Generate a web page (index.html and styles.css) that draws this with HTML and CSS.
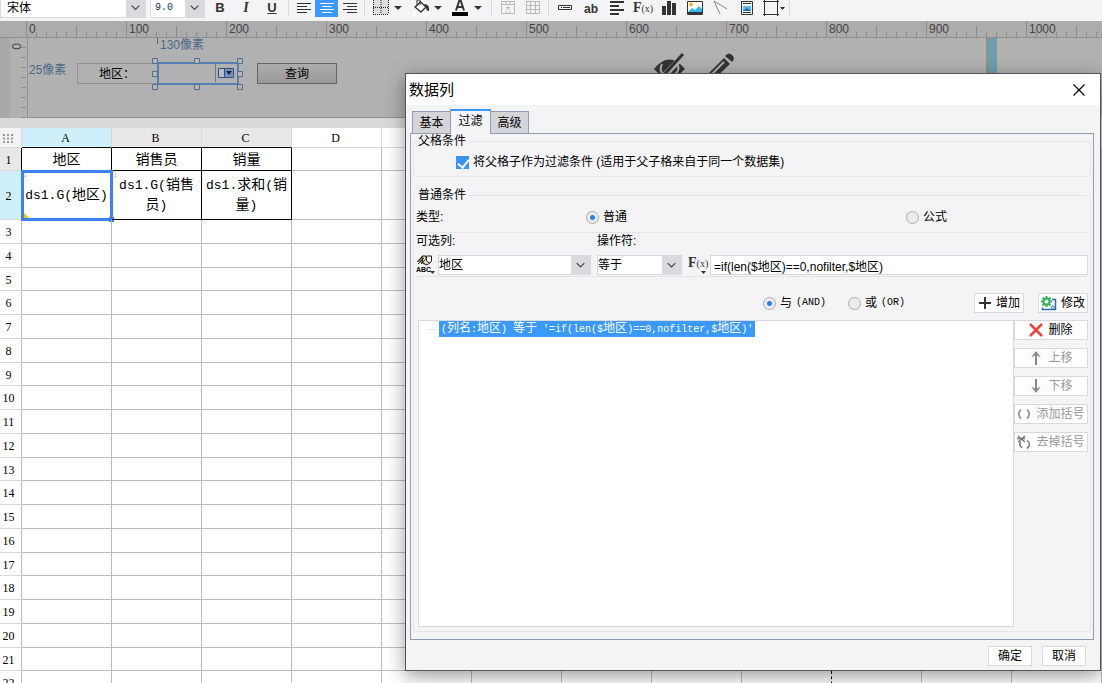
FILE: index.html
```html
<!DOCTYPE html>
<html lang="zh-CN">
<head>
<meta charset="utf-8">
<title>数据列</title>
<link rel="stylesheet" href="styles.css">
</head>
<body>
<main class="app">
  <div class="toolbar" role="toolbar">
    <div class="combo combo-font">
      <select aria-label="字体"><option>宋体</option></select>
      <svg class="chevron" viewBox="0 0 20 18"><path d="M6 6l4 4 4-4"/></svg>
    </div>
    <div class="combo combo-size">
      <select class="mono-small" aria-label="字号"><option>9.0</option></select>
      <svg class="chevron" viewBox="0 0 20 18"><path d="M6 6l4 4 4-4"/></svg>
    </div>
    <div class="tools">
      <button class="tool" aria-label="加粗"><b>B</b></button>
      <button class="tool" aria-label="斜体"><i>I</i></button>
      <button class="tool" aria-label="下划线"><u>U</u></button>
    </div>
    <span class="sep"></span>
    <div class="tools">
      <button class="tool tool-align" aria-label="左对齐"><svg width="20" height="18"><path class="ink" d="M3 3.500h14M3 6.500h10M3 9.500h14M3 12.500h10"/></svg></button>
      <button class="tool tool-align" aria-label="居中" aria-pressed="true"><svg width="20" height="18"><path class="ink" d="M3 3.500h14M5 6.500h10M3 9.500h14M5 12.500h10"/></svg></button>
      <button class="tool tool-align" aria-label="右对齐"><svg width="20" height="18"><path class="ink" d="M3 3.500h14M7 6.500h10M3 9.500h14M7 12.500h10"/></svg></button>
    </div>
    <span class="sep"></span>
    <div class="tools">
      <button class="tool tool-drop" aria-label="边框"><svg width="40" height="18"><path d="M5 0h16v14H5z" fill="#dedee1"/><path d="M5.500 0v14M20.500 0v14M5 14.500h16M13 0v14M5 7.500h16" fill="none" stroke="#222" stroke-dasharray="1 1"/><path class="fill" d="M26 6h8l-4 4z"/></svg></button>
      <button class="tool tool-drop" aria-label="填充色"><svg width="40" height="18"><path d="M5 12h16v4H5z" fill="#fff"/><path d="M7 7l5.500-5L18 7l-5 5z" fill="#fff" stroke="#333" stroke-width="1.300"/><path d="M9 6V0h3v5" fill="none" stroke="#333"/><path class="fill" d="M16 4q6 0 5 7-3 0-3-4zM26 6h8l-4 4z"/></svg></button>
      <button class="tool tool-drop" aria-label="文字颜色"><svg width="40" height="18"><path d="M4 12h16v4H4z"/><path d="M8 10.500L11.500 0h1L16 10.500M9 7h6" fill="none" stroke="#333" stroke-width="2"/><path class="fill" d="M26 6h8l-4 4z"/></svg></button>
    </div>
    <span class="sep"></span>
    <div class="tools">
      <button class="tool tool-narrow" aria-label="合并单元格" disabled><svg width="20" height="18"><path d="M3.500 1.500h13v12h-13zM3 4.500h14M8 1v3M12 1v3M8 11v3M12 11v3M8 9h4M8 7.500h4" fill="none" stroke="#b8b8b8"/></svg></button>
      <button class="tool tool-narrow" aria-label="取消合并" disabled><svg width="20" height="18"><path d="M3.500 1.500h13v12h-13zM3 5.500h14M3 9.500h14M7.500 1v13M12.500 1v13" fill="none" stroke="#b8b8b8"/></svg></button>
    </div>
    <span class="sep"></span>
    <div class="tools">
      <button class="tool" aria-label="文本框"><svg width="20" height="18"><path d="M3.500 5.500h13v4h-13zM6 7.500h1M8 7.500h7" fill="none" stroke="#333"/></svg></button>
      <button class="tool" aria-label="文本"><b class="ab">ab</b></button>
      <button class="tool" aria-label="富文本"><svg width="20" height="18"><path d="M3 2h14M3 6h9M3 10h14M3 14h9" stroke="#333" stroke-width="2"/></svg></button>
      <button class="tool" aria-label="公式"><span class="fx">F<small>(x)</small></span></button>
      <button class="tool" aria-label="图表"><svg width="20" height="18"><path class="fill" d="M3 6h4v9H3zM8 1h4v14H8zM13 3h4v12h-4z"/></svg></button>
      <button class="tool" aria-label="图片"><svg width="20" height="18"><path d="M2.500 1.500h15v13h-15z" fill="#fff" stroke="#333"/><path d="M3 12l4-4 3 2 4-4 3 3v3z" fill="#35b5f5"/><path class="fill" d="M3 12h14v3H3z"/><circle cx="6" cy="4.500" r="2" fill="#fcb53b"/></svg></button>
      <button class="tool" aria-label="斜线"><svg width="20" height="18"><path d="M3 1l13 8M3 1l6 13" fill="none" stroke="#888"/></svg></button>
      <button class="tool" aria-label="子报表"><svg width="20" height="18"><path d="M4.500 1.500h11v13h-11z" fill="#fff" stroke="#333"/><path d="M6 3.500h8M6 12.500h8" stroke="#333"/><path d="M6 6h8v5H6z" fill="#58b9f3"/><path d="M6 11l4-3 4 3z" fill="#1769b5"/></svg></button>
      <button class="tool" aria-label="悬浮元素"><svg width="24" height="18"><path d="M3.500 0v16M16.500 0v16M2 1.500h16M2 14.500h16" fill="none" stroke="#333"/><path class="fill" d="M19 7h5l-2.500 3z"/></svg></button>
    </div>
    <span class="sep"></span>
  </div>

  <section class="designer">
    <div class="ruler-x"><span>0</span><span>100</span><span>200</span><span>300</span><span>400</span><span>500</span><span>600</span><span>700</span><span>800</span><span>900</span><span>1000</span></div>
    <div class="designer-body">
      <div class="gutter"></div>
      <div class="ruler-y"><span>0</span></div>
      <div class="canvas">
        <span class="measure measure-x">130像素</span>
        <span class="measure measure-y">25像素</span>
        <label class="widget widget-label" for="area">地区：</label>
        <div class="widget widget-combo">
          <input id="area" type="text">
          <svg width="22" height="18"><path d="M.5 0v18" stroke="#777"/><path d="M3.500 4.500h15v9h-15zM9.500 4v9" fill="#b8bec8" stroke="#34507f"/><path d="M10 5h8v8h-8z" fill="#7891b5"/><path d="M11 7h6l-3 4z" fill="#14244a"/></svg>
        </div>
        <svg class="handles" width="94" height="36"><path d="M1.500 3.500h5v5h-5zM43.500 3.500h5v5h-5zM86.500 3.500h5v5h-5zM1.500 16.500h5v5h-5zM86.500 16.500h5v5h-5zM1.500 29.500h5v5h-5zM43.500 29.500h5v5h-5zM86.500 29.500h5v5h-5z"/></svg>
        <button class="widget widget-query">查询</button>
        <svg class="canvas-icons" width="90" height="40">
          <path d="M1 16Q16-3 32 16 16 33 1 16z" fill="#333"/>
          <path d="M9 11q-4 7 3 11M24 10q4 7-2 11" fill="none" stroke="#b1b1b1" stroke-width="2"/>
          <path d="M9 25L30 3" stroke="#b1b1b1" stroke-width="6"/>
          <path d="M8 25L30 1" stroke="#333" stroke-width="3"/>
          <path d="M53 23L71 5l6 6-19 18-8 2z" fill="#333"/><path d="M57 23L71 9" stroke="#b1b1b1" stroke-width="2"/>
          <path d="M72 3q4-5 8 0 2 3-1 6z" fill="#333"/>
        </svg>
      </div>
      <div class="edge"></div>
    </div>
  </section>

  <div class="sheet">
    <table class="grid">
      <colgroup><col class="col-head"><col span="12" class="col-cell"></colgroup>
      <thead>
        <tr class="head">
          <th class="corner"><svg width="11" height="9"><path d="M1 1h2M5 1h2M9 1h2M1 4.500h2M5 4.500h2M9 4.500h2M1 8h2M5 8h2M9 8h2" stroke="#999" stroke-width="2"/></svg></th>
          <th class="active inked">A</th><th class="used inked">B</th><th class="used inked">C</th><th>D</th>
          <th></th><th></th><th></th><th></th><th></th><th></th><th></th><th></th>
        </tr>
      </thead>
      <tbody id="rows">
        <tr class="row-1">
          <th class="used inked-side">1</th>
          <td class="inked">地区</td><td class="inked">销售员</td><td class="inked">销量</td>
          <td></td><td></td><td></td><td></td><td></td><td class="page-end"></td><td></td><td></td><td></td>
        </tr>
        <tr class="row-2">
          <th class="active inked-side">2</th>
          <td class="inked selected"><span class="latin">ds1.G(</span>地区<span class="latin">)</span><i class="frame"></i></td>
          <td class="inked expand"><span class="latin">ds1.G(</span>销售员<span class="latin">)</span></td>
          <td class="inked"><span class="latin">ds1.</span>求和<span class="latin">(</span>销量<span class="latin">)</span></td>
          <td></td><td></td><td></td><td></td><td></td><td class="page-end"></td><td></td><td></td><td></td>
        </tr>
      </tbody>
    </table>
  </div>

  <section class="dialog" role="dialog" aria-labelledby="dialog-title">
    <header class="titlebar">
      <h1 id="dialog-title">数据列</h1>
      <button class="close" aria-label="关闭"><svg width="14" height="14"><path d="M1.500 1.500l11 11M12.500 1.500l-11 11" stroke="#000" stroke-width="1.300"/></svg></button>
    </header>
    <div class="tabs" role="tablist">
      <button class="tab" role="tab">基本</button>
      <button class="tab" role="tab" aria-selected="true">过滤</button>
      <button class="tab" role="tab">高级</button>
    </div>
    <div class="panel" role="tabpanel">
      <fieldset class="group parent-group">
        <legend>父格条件</legend>
        <label class="choice"><input type="checkbox" checked>将父格子作为过滤条件 (适用于父子格来自于同一个数据集)</label>
      </fieldset>
      <fieldset class="group">
        <legend>普通条件</legend>
        <div class="type-row">
          <span>类型:</span>
          <label class="choice"><input type="radio" name="type" checked>普通</label>
          <label class="choice"><input type="radio" name="type">公式</label>
        </div>
        <div class="condition">
          <label for="column">可选列:</label>
          <label for="operator">操作符:</label>
          <span></span>
          <div class="field">
            <button class="kind" aria-label="列类型"><svg width="22" height="20"><path d="M1 6l5-5h4l-1 5 3 2-3 2z" fill="#8a7a62"/><path d="M6 1h4v4l5 2-4 3-4-2z" fill="#ecdcc0" stroke="#222"/><path d="M1 7l6-6M2 9l6-6M5 9l4-4" stroke="#222"/><path d="M10.500 1h5v5l-2 2-3-2z" fill="#fff" stroke="#222"/><path class="fill" d="M14 16h5l-2.500 3z"/></svg><small>ABC</small></button>
            <div class="combo combo-column"><select id="column"><option>地区</option></select><svg class="chevron" viewBox="0 0 20 18"><path d="M6 7l4 4 4-4"/></svg></div>
          </div>
          <div class="combo combo-operator"><select id="operator"><option>等于</option></select><svg class="chevron" viewBox="0 0 20 18"><path d="M6 7l4 4 4-4"/></svg></div>
          <div class="field">
            <button class="kind" aria-label="公式"><span class="fx">F<small>(x)</small></span><svg width="22" height="20"><path class="fill" d="M13 16h5l-2.500 3z"/></svg></button>
            <input class="formula" type="text" aria-label="公式内容" value="=if(len($地区)==0,nofilter,$地区)">
          </div>
        </div>
        <div class="logic-row">
          <label class="choice"><input type="radio" name="logic" checked><span>与</span><span class="song">(AND)</span></label>
          <label class="choice"><input type="radio" name="logic"><span>或</span><span class="song">(OR)</span></label>
          <div class="edit-buttons">
            <button class="btn"><svg width="14" height="14"><path d="M7 1v12M1 7h12" stroke="#333" stroke-width="2"/></svg>增加</button>
            <button class="btn"><svg width="16" height="15"><path d="M11 3.500h3.500v10H1.500v-2" fill="none" stroke="#2470b3" stroke-width="1.500"/><circle cx="12" cy="11.500" r="1.500" fill="#fff" stroke="#2470b3"/><circle cx="5.500" cy="5.500" r="3" fill="none" stroke="#2fb457" stroke-width="2"/><path d="M5.500 0v2M5.500 9v2M0 5.500h2M9 5.500h2M1.500 1.500l1.500 1.500M8 8l1.500 1.500M1.500 9.500L3 8M8 3l1.500-1.500" stroke="#2fb457" stroke-width="2"/></svg>修改</button>
          </div>
        </div>
        <div class="list-row">
          <ul class="tree"><li><span><span class="latin">(</span>列名<span class="latin">:</span>地区<span class="latin">) </span>等于<span class="latin"> '=if(len($</span>地区<span class="latin">)==0,nofilter,$</span>地区<span class="latin">)'</span></span></li></ul>
          <div class="actions">
            <button class="btn"><svg width="14" height="14"><path d="M1 1l12 12M13 1L1 13" stroke="#e8453c" stroke-width="2.500"/></svg>删除</button>
            <button class="btn" disabled><svg width="14" height="14"><path d="M7 14V3" stroke="#888" stroke-width="2"/><path d="M2 6.500L7 0l5 6.500-5-2.500z" fill="#888"/></svg>上移</button>
            <button class="btn" disabled><svg width="14" height="14"><path d="M7 0v11" stroke="#888" stroke-width="2"/><path d="M2 7.500L7 14l5-6.500-5 2.500z" fill="#888"/></svg>下移</button>
            <button class="btn" disabled><svg width="14" height="14"><path d="M4 2.500Q-.5 7 4 11.500M10 2.500q4.500 4.500 0 9" fill="none" stroke="#888" stroke-width="1.500"/></svg>添加括号</button>
            <button class="btn" disabled><svg width="14" height="14"><path d="M4 6.500Q1 9 5 13M10 5.500q5 3.500 0 8M1 1l7 6M8 1L1 7M0 3.500h8" fill="none" stroke="#777" stroke-width="1.500"/></svg>去掉括号</button>
          </div>
        </div>
      </fieldset>
    </div>
    <footer class="footer">
      <button class="btn">确定</button>
      <button class="btn">取消</button>
    </footer>
  </section>
</main>
<script src="sheet.js"></script>
</body>
</html>
```

FILE: styles.css
```css
* { box-sizing: border-box; }
body {
  margin: 0;
  background: #fff;
  color: #000;
  font: 12px/16px "Liberation Sans", "Noto Sans CJK SC", sans-serif;
}
button, input, select { font: inherit; color: inherit; margin: 0; }
button { padding: 0; border: 0; background: none; }
svg { display: block; flex: none; }
.ink { fill: none; stroke: #333; }
.fill { fill: #333; }
.latin { font-family: "Liberation Mono", monospace; }
.app {
  position: relative;
  display: flex;
  flex-direction: column;
  height: 100vh;
  overflow: hidden;
}

/* Toolbar */
.toolbar { display: flex; flex: none; height: 21px; background: #f4f4f7; overflow: hidden; }
.combo { position: relative; display: flex; border: 1px solid #d9dadd; background: #fff; }
.combo select {
  appearance: none;
  width: 100%;
  height: 18px;
  padding: 0 20px 0 0;
  border: 0;
  border-radius: 0;
  background: none;
}
.chevron {
  position: absolute;
  top: 0;
  right: 0;
  width: 19px;
  height: 100%;
  background: #d9dadd;
  fill: none;
  stroke: #444;
  stroke-width: 1.3;
  pointer-events: none;
}
.toolbar .combo { height: 18px; border-top: 0; margin-right: 4px; }
.toolbar .combo select { height: 16px; }
.combo-font { width: 146px; }
.combo-font select { padding-left: 6px; }
.toolbar .combo-size { width: 55px; margin-right: 2px; }
.combo-size select { padding-left: 4px; }
.mono-small { font: 10px/16px "Liberation Mono", monospace; color: #136; }
.tools { display: flex; }
.tool {
  display: flex;
  justify-content: center;
  width: 26px;
  height: 17px;
  color: #333;
  font-size: 13px;
  line-height: 16px;
}
.tool i { font: italic bold 14px/16px "Liberation Serif", serif; }
.tool u { font-weight: bold; }
.tool-align { width: 23px; }
.tool-align[aria-pressed="true"] { background: #3b99fc; }
.tool-align[aria-pressed="true"] .ink { stroke: #fff; }
.tool-drop { width: 40px; }
.tool-narrow { width: 25px; }
.ab { font-size: 12px; line-height: 18px; }
.fx { font: bold 14px/16px "Liberation Serif", serif; color: #333; white-space: nowrap; }
.fx small { font-size: 10px; font-weight: normal; }
.sep { width: 1px; height: 16px; margin: 0 3px; background: #d9dadd; }

/* Form designer */
.designer {
  flex: none;
  background: #b1b1b1;
  border-bottom: 10px solid #d9d9db;
}
.ruler-x {
  display: flex;
  height: 17px;
  padding-left: 26px;
  border-bottom: 1px solid #8f8f8f;
  background:
    repeating-linear-gradient(90deg, #8c8c8c 0 1px, transparent 1px 100px) 26px 0 / 100% 16px no-repeat,
    repeating-linear-gradient(90deg, #8c8c8c 0 1px, transparent 1px 50px) 26px 5px / 100% 11px no-repeat,
    repeating-linear-gradient(90deg, #8c8c8c 0 1px, transparent 1px 10px) 26px 11px / 100% 5px no-repeat,
    #acacac;
}
.ruler-x span { flex: none; width: 100px; padding-left: 3px; color: #444; line-height: 17px; }
.designer-body { display: flex; height: 80px; }
.gutter { width: 10px; background: #a8a8a8; }
.ruler-y {
  width: 17px;
  background: repeating-linear-gradient(#8c8c8c 0 1px, transparent 1px 10px) 11px 9px / 5px 100% no-repeat;
}
.ruler-y span { writing-mode: vertical-rl; line-height: 12px; color: #444; }
.canvas { position: relative; width: 961px; border: 1px solid #8f8f8f; border-right-width: 2px; border-top: 0; }
.edge { width: 9px; background: #6d9eab; }
.measure { position: absolute; color: #4b6886; line-height: 14px; }
.measure-x { left: 129px; top: 0; padding-left: 3px; }
.measure-x::before { content: ""; position: absolute; left: 0; top: 0; height: 6px; border-left: 1px solid #4b6886; }
.measure-y { left: 1px; top: 25px; }
.widget { position: absolute; top: 25px; height: 21px; border: 1px solid #929292; line-height: 20px; }
.widget-label { left: 49px; width: 81px; padding-left: 21px; }
.widget-combo { left: 129px; top: 24px; width: 82px; height: 23px; display: flex; border: 2px solid #5680b2; }
.widget-combo input { flex: 1; min-width: 0; border: 0; background: none; }
.widget-query { left: 229px; width: 80px; border-color: #666; background: linear-gradient(#adadad, #989898); }
.handles { position: absolute; left: 123px; top: 17px; fill: #b5b5b5; stroke: #4f6f91; }
.canvas-icons { position: absolute; left: 625px; top: 15px; }

/* Spreadsheet */
.sheet { flex: 1; min-height: 0; overflow: hidden; }
.grid { table-layout: fixed; width: 1102px; border-spacing: 0; }
.col-head { width: 22px; }
.col-cell { width: 90px; }
.grid th, .grid td { padding: 0; border: solid #bdbdbd; border-width: 0 1px 1px 0; text-align: center; }
.grid th { border-color: #d9d9d9; font: 12px/15px "Liberation Serif", serif; }
.grid tbody th { padding: 2px 4px 0 0; border-right-color: #bdbdbd; }
.grid td { position: relative; height: 24px; font-size: 14px; line-height: 18px; }
.grid td .latin { font-size: 13px; }
.grid .head th { height: 20px; padding: 2px 2px 0 0; }
.grid .corner { background: #f4f4f7; }
.corner svg { margin-left: 2px; }
.grid .active { background: #cff0fb; }
.grid .used { background: #e8e8e8; }
.grid .head .inked { border-bottom-color: #000; }
.grid td.inked { border-color: #000; }
.grid .inked-side { border-right-color: #000; }
.row-1 td { height: 23px; }
.grid .row-2 td { height: 49px; }
tr:nth-child(4n+1):not(.row-1) td { height: 23px; }
.grid td.page-end { border-right: 1px dashed #000; }
.selected::before, .expand::before {
  content: "↓";
  position: absolute;
  left: 1px;
  top: -1px;
  color: #777;
  font-size: 8px;
  line-height: 10px;
}
.selected::after {
  content: "";
  position: absolute;
  left: 2px;
  bottom: 1px;
  border: solid transparent;
  border-width: 5px 0 0 5px;
  border-left-color: #fdbf00;
}
.frame { position: absolute; inset: -1px -2px -2px -1px; border: 3px solid #3b82f0; }
.frame::after { content: ""; position: absolute; right: -4px; bottom: -4px; width: 5px; height: 5px; background: #3b82f0; }

/* Dialog */
.dialog {
  position: absolute;
  left: 405px;
  right: 1px;
  top: 73px;
  border: 1px solid #555;
  background: #f4f4f7;
  box-shadow: 0 5px 18px rgba(0, 0, 0, .4);
}
.titlebar { display: flex; justify-content: space-between; align-items: center; height: 31px; padding: 0 14px 0 3px; background: #fff; }
.titlebar h1 { margin: 0; font-size: 15px; font-weight: normal; line-height: 20px; }
.tabs { display: flex; align-items: flex-end; height: 28px; padding-left: 6px; }
.tab { width: 39px; height: 22px; padding-top: 1px; border: 1px solid #8d9db5; border-bottom: 0; background: #d5d5d9; }
.tab[aria-selected="true"] {
  position: relative;
  width: 41px;
  height: 25px;
  margin: 0 0 -1px -1px;
  padding: 0 0 4px;
  border-top: 2px solid #3b99fc;
  background: #f4f4f7;
}
.tab:last-child { border-left: 0; width: 38px; }
.panel { margin: 0 6px 0 4px; padding: 0 2px 7px; border: 1px solid #8d9db5; }
.group { min-width: 0; margin: 0; padding: 0 2px 4px; border: 1px solid #e4e4e7; border-radius: 4px; }
.group legend { margin-left: 1px; padding: 0 3px 0 1px; line-height: 14px; }
.parent-group { margin-bottom: 11px; padding: 6px 2px; }
.parent-group .choice { margin-left: 40px; }
.choice { display: flex; align-items: center; gap: 4px; white-space: nowrap; }
.choice input { appearance: none; flex: none; width: 13px; height: 13px; }
.choice input[type="radio"] { border: 1px solid #aaa; border-radius: 50%; background: #ececef; }
.choice input[type="radio"]:checked { background: radial-gradient(circle, #2f7fea 0 2px, #ececef 3px); }
.choice input[type="checkbox"] { position: relative; background: #3b94f0; }
.choice input[type="checkbox"]::after {
  content: "";
  position: absolute;
  left: 4px;
  top: 1px;
  width: 5px;
  height: 9px;
  border: solid #fff;
  border-width: 0 2px 2px 0;
  transform: rotate(40deg);
}
.type-row { display: grid; grid-template-columns: 170px 1fr 182px; align-items: center; height: 31px; border-bottom: 1px solid #e4e4e7; }
.condition {
  display: grid;
  grid-template-columns: 181px 91px 1fr;
  row-gap: 6px;
  border-bottom: 1px solid #e4e4e7;
  padding-bottom: 1px;
}
.field { display: flex; }
.kind { position: relative; width: 22px; height: 20px; text-align: left; }
.kind > svg { position: absolute; left: 0; top: 0; }
.kind > small { position: absolute; left: 0; bottom: 1px; font-size: 7px; font-weight: bold; line-height: 9px; }
.kind .fx { display: block; height: 20px; }
.combo-column { width: 153px; }
.combo-operator { width: 85px; }
.formula { flex: 1; min-width: 0; height: 20px; padding: 0 3px; border: 1px solid #d9dadd; background: #fff; }
.logic-row { display: flex; justify-content: flex-end; align-items: center; gap: 22px; margin-top: 16px; }
.song { font: 10px/16px "Liberation Mono", monospace; }
.edit-buttons { display: flex; gap: 14px; margin-left: 47px; }
.btn {
  display: flex;
  align-items: center;
  justify-content: center;
  gap: 5px;
  height: 20px;
  border: 1px solid #d9dadd;
  background: #fff;
  white-space: nowrap;
}
.btn:disabled { color: #999; }
.edit-buttons .btn { width: 50px; gap: 4px; }
.list-row { display: flex; margin-top: 7px; padding-left: 2px; }
.tree { flex: 1; min-height: 307px; margin: 0; padding: 0 0 0 8px; border: 1px solid #d9dadd; background: #fff; list-style: none; }
.tree li { display: flex; align-items: center; gap: 2px; }
.tree li::before { content: ""; width: 10px; border-top: 1px solid #e4e4e7; }
.tree li > span { padding: 0 2px; background: #3b99fc; color: #fff; line-height: 15px; white-space: pre; }
.tree .latin { font-size: 10px; }
.actions { display: flex; flex-direction: column; gap: 8px; width: 74px; }
.footer { display: flex; justify-content: flex-end; gap: 10px; padding: 6px 14px 4px; }
.footer .btn { width: 44px; }
```

FILE: sheet.js
```js
const body = document.getElementById("rows");
const COLUMNS = 12;
const PAGE_END = 9;
for (let n = 3; n <= 22; n++) {
  const row = body.insertRow();
  const head = document.createElement("th");
  head.textContent = n;
  row.append(head);
  for (let c = 1; c <= COLUMNS; c++) {
    const cell = row.insertCell();
    if (c === PAGE_END) cell.className = "page-end";
  }
}
```
